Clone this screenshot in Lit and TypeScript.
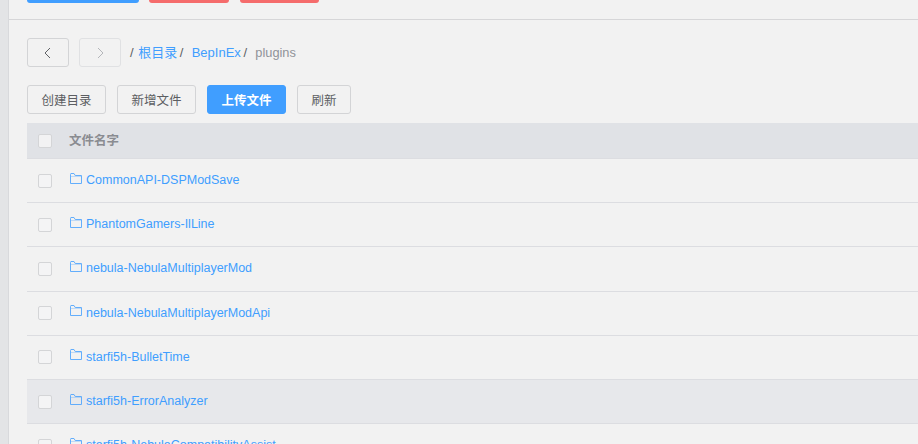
import { LitElement, html, css, svg } from "lit";
import { customElement } from "lit/decorators.js";

const folder = svg`<path d="M1.5 2.5 V11.5 H12.5 V3.5 H6.2 L5 1.5 H2 Q1.5 1.5 1.5 2.5 Z" fill="none" stroke="#409eff" stroke-width="1"/><path d="M1.5 4.5 H12.5" stroke="#409eff" stroke-width="1" opacity=".35"/>`;

const rows = [
  "CommonAPI-DSPModSave",
  "PhantomGamers-IlLine",
  "nebula-NebulaMultiplayerMod",
  "nebula-NebulaMultiplayerModApi",
  "starfi5h-BulletTime",
  "starfi5h-ErrorAnalyzer",
  "starfi5h-NebulaCompatibilityAssist",
];

@customElement("app-root")
export class AppRoot extends LitElement {
  static styles = css`
    :host {
      display: block;
      width: 918px;
      height: 444px;
      overflow: hidden;
      background: #f2f2f2;
      font-family: "Liberation Sans", "Noto Sans CJK SC", sans-serif;
      font-size: 12.5px;
      color: #5c5e62;
    }
    .page { display: flex; height: 444px; }
    .rail { width: 8px; flex: none; background: #e3e4e6; border-right: 1px solid #d8d9dc; }
    .main { flex: 1; min-width: 0; }
    .top { height: 19px; border-bottom: 1px solid #d6d6d8; display: flex; padding-left: 18px; align-items: flex-start; }
    .pill { height: 3px; border-radius: 0 0 4px 4px; }
    .pill.blue { width: 112px; background: #409eff; }
    .pill.red1 { width: 80px; background: #f56c6c; margin-left: 10px; }
    .pill.red2 { width: 79px; background: #f56c6c; margin-left: 11px; }
    .content { padding: 18px 0 0 18px; }
    .crumbs { display: flex; align-items: center; height: 29px; gap: 10px; }
    .nav { width: 42px; height: 29px; box-sizing: border-box; border: 1px solid #d3d4d6; border-radius: 3px; display: flex; align-items: center; justify-content: center; }
    .nav.off { border-color: #e0e1e3; }
    .path { display: flex; align-items: baseline; font-size: 13px; white-space: pre; line-height: 18px; }
    .path .sep { margin-left: -1px; margin-right: 1px; }
    .path a { color: #409eff; }
    .path .last { color: #909399; font-size: 12.8px; }
    .actions { display: flex; gap: 11px; margin-top: 18px; }
    .btn { height: 29px; box-sizing: border-box; border: 1px solid #d3d4d6; border-radius: 3px; display: flex; align-items: center; justify-content: center; color: inherit; }
    .btn.w79 { width: 79px; }
    .btn.w54 { width: 54px; }
    .btn.primary { background: #409eff; border-color: #409eff; color: #fff; font-weight: 700; }
    .table { margin-top: 9px; }
    .head, .row { display: flex; align-items: center; box-sizing: border-box; border-bottom: 1px solid #dcdde1; }
    .head { height: 36px; background: #e0e2e6; color: #8a8c91; font-weight: 700; }
    .row { height: 44.2px; }
    .row.hover { background: #e7e8eb; }
    .check { width: 12px; height: 12px; border: 1px solid #d4d5d7; border-radius: 2px; background: #f4f4f5; margin-left: 11px; flex: none; }
    .head .check { background: #f2f2f3; }
    .label { margin-left: 17px; margin-bottom: 2px; }
    .name { margin-left: 17px; display: flex; align-items: center; color: #409eff; margin-bottom: 1px; }
    .name svg { width: 13px; height: 13px; margin-right: 4px; margin-top: -4px; opacity: .8; }
  `;

  render() {
    return html`<div class="page">
      <div class="rail"></div>
      <div class="main">
        <div class="top">
          <div class="pill blue"></div><div class="pill red1"></div><div class="pill red2"></div>
        </div>
        <div class="content">
          <div class="crumbs">
            <div class="nav"><svg width="12" height="12" viewBox="0 0 12 12"><path d="M8 1 L3 6 L8 11" fill="none" stroke="#606266" stroke-width="1"/></svg></div>
            <div class="nav off"><svg width="12" height="12" viewBox="0 0 12 12"><path d="M4 1 L9 6 L4 11" fill="none" stroke="#b4b6ba" stroke-width="1"/></svg></div>
            <div class="path"><span class="sep">/ </span><a>根目录</a><span class="sep"> /  </span><a>BepInEx</a><span class="sep"> /  </span><span class="last">plugins</span></div>
          </div>
          <div class="actions">
            <div class="btn w79">创建目录</div>
            <div class="btn w79">新增文件</div>
            <div class="btn w79 primary">上传文件</div>
            <div class="btn w54">刷新</div>
          </div>
          <div class="table">
            <div class="head"><span class="check"></span><span class="label">文件名字</span></div>
            ${rows.map((r, i) => html`<div class="row ${i === 5 ? "hover" : ""}">
              <span class="check"></span>
              <span class="name"><svg viewBox="0 0 13 13">${folder}</svg>${r}</span>
            </div>`)}
          </div>
        </div>
      </div>
    </div>`;
  }
}
